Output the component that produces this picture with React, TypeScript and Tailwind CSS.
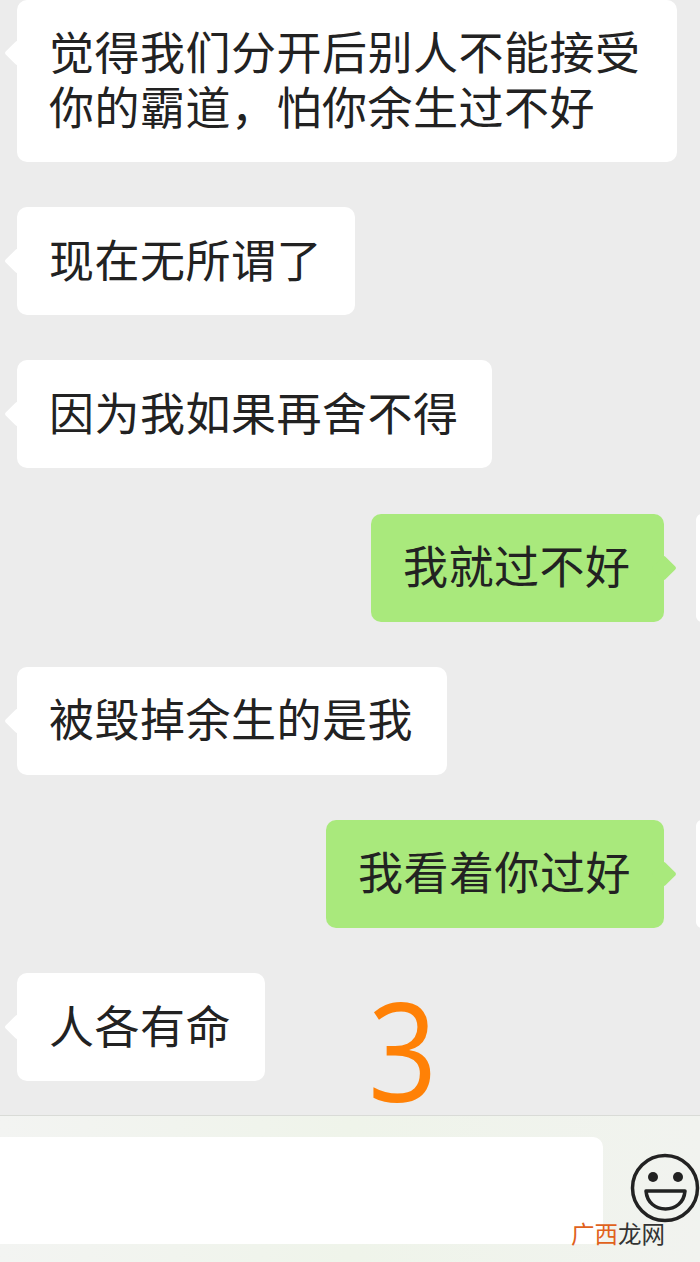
const cjk = "font-['Noto_Sans_CJK_SC','Noto_Sans',sans-serif]";

function Incoming({ text, width }: { text: string; width: string }) {
  return (
    <div className={`relative ml-[17px] flex h-[108px] items-center rounded-[10px] bg-white pb-[6px] pl-[32px] ${width}`}>
      <div className="absolute left-[-9px] top-[45px] h-[18px] w-[18px] rotate-45 rounded-[2px] bg-white" />
      <span className="relative whitespace-nowrap">{text}</span>
    </div>
  );
}

function Outgoing({ text, width }: { text: string; width: string }) {
  return (
    <div className="flex items-center justify-end">
      <div className={`relative flex h-[108px] items-center rounded-[10px] bg-[#a9e97c] pb-[6px] pl-[32px] ${width}`}>
        <div className="absolute right-[-9px] top-[45px] h-[18px] w-[18px] rotate-45 rounded-[2px] bg-[#a9e97c]" />
        <span className="relative whitespace-nowrap">{text}</span>
      </div>
      <div className="ml-[32px] mr-[-8px] h-[108px] w-[12px] rounded-l-[6px] bg-white" />
    </div>
  );
}

export default function App() {
  return (
    <div className={`relative flex h-[1262px] w-[700px] flex-col overflow-hidden bg-[#ececec] text-[45px] leading-[55px] tracking-[0.5px] text-[#222222] ${cjk}`}>
      <div className="flex h-[1115px] flex-col gap-[45.2px]">
        {/* first bubble is cut off by the top of the shot */}
        <div className="relative ml-[17px] h-[162px] w-[660px] rounded-[10px] bg-white pl-[32px] pt-[23px]">
          <div className="absolute left-[-9px] top-[44px] h-[18px] w-[18px] rotate-45 rounded-[2px] bg-white" />
          <p className="relative whitespace-nowrap">觉得我们分开后别人不能接受</p>
          <p className="relative whitespace-nowrap">你的霸道，怕你余生过不好</p>
        </div>
        <Incoming text="现在无所谓了" width="w-[338px]" />
        <Incoming text="因为我如果再舍不得" width="w-[475px]" />
        <Outgoing text="我就过不好" width="w-[293px]" />
        <Incoming text="被毁掉余生的是我" width="w-[430px]" />
        <Outgoing text="我看着你过好" width="w-[338px]" />
        <div className="flex items-start">
          <Incoming text="人各有命" width="w-[248px]" />
          <span className="ml-[103px] mt-[25px] inline-block origin-left scale-x-[0.88] font-['Open_Sans',sans-serif] text-[138px] font-normal leading-[100px] tracking-normal text-[#ff8106]">3</span>
        </div>
      </div>

      {/* input bar */}
      <div className="flex h-[147px] items-start border-t border-[#d9dbd7] bg-gradient-to-r from-[#f3f4f2] via-[#eff4ea] to-[#f1f3ef] pt-[21px]">
        <div className="h-[107px] w-[604px] rounded-r-[10px] bg-white" />
        <svg className="ml-[27px] mt-[16px] shrink-0" width="70" height="70" viewBox="0 0 70 70" fill="none">
          <circle cx="35" cy="35" r="32.5" stroke="#222222" strokeWidth="3.5" />
          <circle cx="23" cy="24" r="5" fill="#222222" />
          <circle cx="48" cy="24" r="5" fill="#222222" />
          <path d="M16 38 H55 C54 50 45 56 35.5 56 C26 56 17 50 16 38 Z" stroke="#222222" strokeWidth="3.5" strokeLinejoin="round" fill="#f4f5f2" />
        </svg>
      </div>

      {/* watermark */}
      <div className="absolute left-[571px] top-[1219px] text-[23.5px] leading-[28px] tracking-normal">
        <span className="text-[#e0621c]">广西</span>
        <span className="text-[#333333]">龙网</span>
      </div>
    </div>
  );
}
